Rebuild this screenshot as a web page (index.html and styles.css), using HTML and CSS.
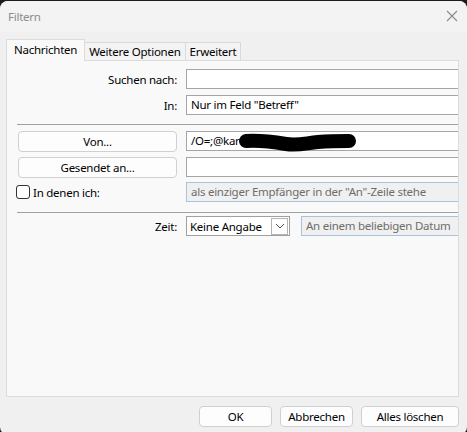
FILE: index.html
```html
<!DOCTYPE html>
<html lang="de">
<head>
    <meta charset="UTF-8">
    <title>Filtern</title>
    <link rel="stylesheet" href="styles.css">
</head>
<body>
    <div class="window">
        <div class="titlebar">
            <span class="title">Filtern</span>
            <svg class="close" width="12" height="12" viewBox="0 0 12 12">
                <path d="M1 1 L11 11 M11 1 L1 11" stroke="#8a8a8a" stroke-width="1.1" fill="none"/>
            </svg>
        </div>
        <div class="content">
            <div class="tabs">
                <div class="tab active">Nachrichten</div>
                <div class="tab">Weitere Optionen</div>
                <div class="tab">Erweitert</div>
            </div>
            <div class="panel">
                <div class="row first">
                    <label class="lbl">Suchen nach:</label>
                    <div class="field"></div>
                </div>
                <div class="row gap6">
                    <label class="lbl">In:</label>
                    <div class="field">Nur im Feld "Betreff"</div>
                </div>
                <div class="sep sep1"></div>
                <div class="row gap6">
                    <div class="lbl"><button class="btn wide">Von...</button></div>
                    <div class="field redacted">/O=;@kar
                        <svg class="blob" width="130" height="22" viewBox="0 0 130 22">
                            <path d="M10 10 C25 9, 38 11, 50 13 C62 15, 70 12, 82 11 C95 10, 105 10, 113 10" stroke="#000" stroke-width="14" stroke-linecap="round" fill="none"/>
                        </svg>
                    </div>
                </div>
                <div class="row gap6">
                    <div class="lbl"><button class="btn wide">Gesendet an...</button></div>
                    <div class="field"></div>
                </div>
                <div class="row gap5">
                    <div class="lbl check">
                        <span class="box"></span>
                        <span>In denen ich:</span>
                    </div>
                    <div class="field disabled">als einziger Empfänger in der "An"-Zeile stehe</div>
                </div>
                <div class="sep sep2"></div>
                <div class="row gap3">
                    <label class="lbl">Zeit:</label>
                    <div class="select">
                        <span>Keine Angabe</span>
                        <span class="drop">
                            <svg width="10" height="6" viewBox="0 0 10 6">
                                <path d="M1 1 L5 5 L9 1" stroke="#555" stroke-width="1" fill="none"/>
                            </svg>
                        </span>
                    </div>
                    <div class="field disabled date">An einem beliebigen Datum</div>
                </div>
            </div>
            <div class="footer">
                <button class="btn small">OK</button>
                <button class="btn small">Abbrechen</button>
                <button class="btn large">Alles löschen</button>
            </div>
        </div>
    </div>
</body>
</html>
```

FILE: styles.css
```css
html, body { margin: 0; padding: 0; background: #1c1c1c; }
body { font-family: "Noto Sans", "Open Sans", sans-serif; font-size: 11.5px; letter-spacing: -0.25px; color: #000; }

.window { margin-top: 1px; height: 434px; background: #f0f0f0; border-radius: 8px; overflow: hidden; }
.titlebar { height: 31px; background: #f3f3f3; display: flex; align-items: center; justify-content: space-between; padding: 0 9px 0 8px; }
.title { color: #8c8c8c; margin-top: -1px; }
.close { margin-top: -2px; }

.content { padding: 7px 8px 0 6px; }

.tabs { display: flex; align-items: flex-end; height: 21px; }
.tab { height: 18px; line-height: 17px; padding: 0 4px; border: 1px solid #d9d9d9; border-bottom: none; background: #f3f3f3; box-sizing: border-box; margin-left: -1px; }
.tab.active { line-height: 19px; padding: 0 7px; background: #f9f9f9; border-color: #dcdcdc; margin-left: 0; position: relative; z-index: 1; margin-bottom: -1px; height: 22px; }

.panel { height: 337px; box-sizing: border-box; border: 1px solid #dcdcdc; background: #f9f9f9; padding: 8px 0 0 10px; overflow: hidden; }

.row { display: flex; align-items: center; height: 20px; }
.row.gap6 { margin-top: 6px; }
.row.gap5 { margin-top: 5px; }
.row.gap3 { margin-top: 3px; }

.lbl { width: 160px; flex: none; text-align: right; margin-right: 9px; }
.lbl .btn { width: 159px; }

.field { flex: none; width: 285px; height: 20px; box-sizing: border-box; border: 1px solid #a5a5a5; background: #fff; padding: 0 4px; line-height: 18px; white-space: nowrap; }
.field.redacted { position: relative; }
.blob { position: absolute; left: 49px; top: -1px; }
.field.disabled { background: #f0f0f0; color: #6d6d6d; border-color: #a9c3df #e0e0e0 #a9c3df #a9c3df; }
.field.date { margin-left: 11px; width: 170px; }

.sep { height: 1px; background: #a0a0a0; margin-right: -20px; }
.sep1 { margin-top: 9px; }
.sep2 { margin-top: 10px; }

.check { display: flex; align-items: center; justify-content: flex-start; gap: 3px; margin-left: -1px; width: 161px; }
.box { width: 12px; height: 12px; border: 1px solid #333; border-radius: 3px; background: #fff; }

.select { flex: none; width: 104px; height: 20px; box-sizing: border-box; border: 1px solid #a0a0a0; background: #fff; display: flex; align-items: center; justify-content: space-between; padding: 0 1px 0 3px; }
.drop { width: 15px; height: 15px; border: 1px solid #b4b4b4; display: flex; align-items: center; justify-content: center; background: #fff; }

.btn { font-family: inherit; font-size: 11.5px; letter-spacing: -0.25px; color: #000; height: 21px; padding: 0; background: #fdfdfd; border: 1px solid #d0d0d0; border-radius: 4px; box-sizing: border-box; }

.footer { display: flex; justify-content: flex-end; gap: 8px; margin-top: 9px; }
.btn.small { width: 73px; }
.btn.large { width: 98px; }
```
